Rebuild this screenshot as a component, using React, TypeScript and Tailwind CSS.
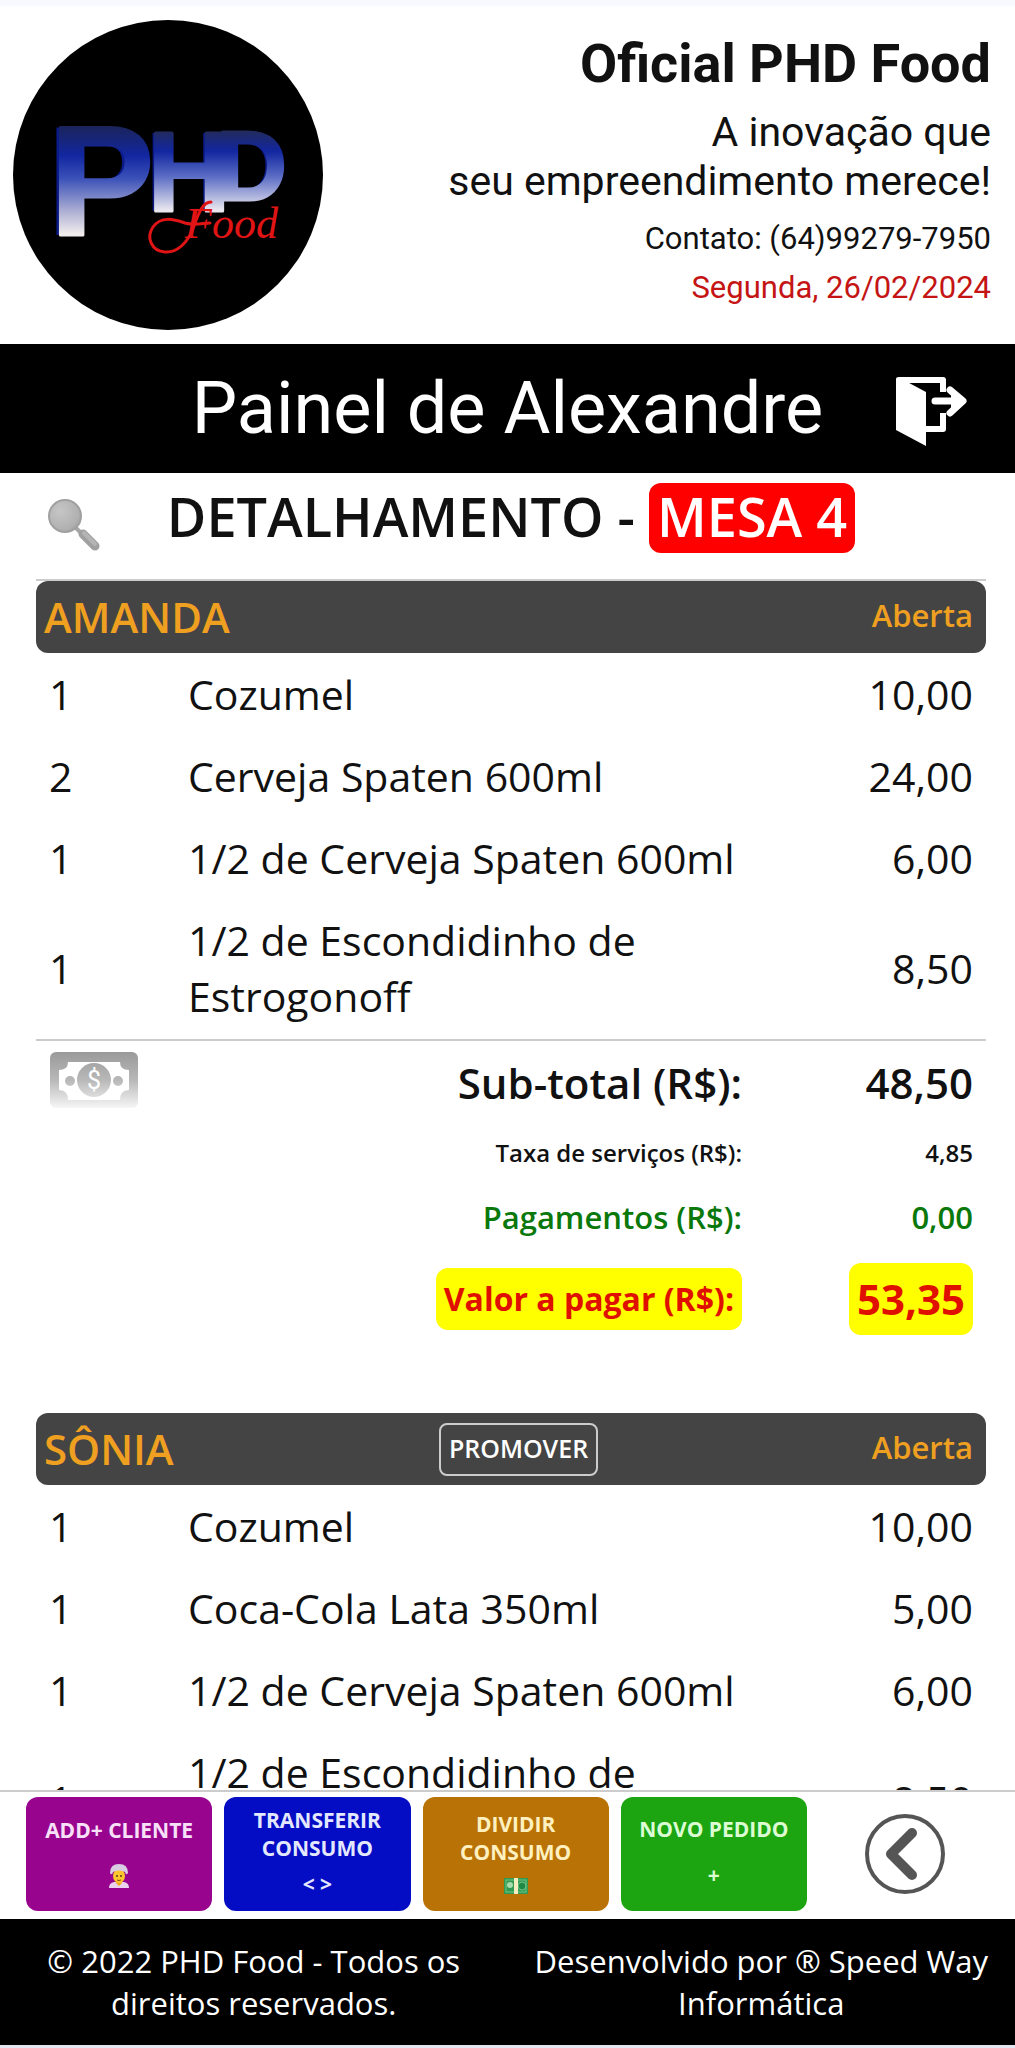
import { useState } from "react";

type Item = { qty: number; name: string; price: string };

const amanda: Item[] = [
  { qty: 1, name: "Cozumel", price: "10,00" },
  { qty: 2, name: "Cerveja Spaten 600ml", price: "24,00" },
  { qty: 1, name: "1/2 de Cerveja Spaten 600ml", price: "6,00" },
  { qty: 1, name: "1/2 de Escondidinho de Estrogonoff", price: "8,50" },
];

const sonia: Item[] = [
  { qty: 1, name: "Cozumel", price: "10,00" },
  { qty: 1, name: "Coca-Cola Lata 350ml", price: "5,00" },
  { qty: 1, name: "1/2 de Cerveja Spaten 600ml", price: "6,00" },
  { qty: 1, name: "1/2 de Escondidinho de Estrogonoff", price: "8,50" },
];

const Logo = () => (
  <svg viewBox="0 0 310 310" className="size-[310px] shrink-0" role="img" aria-label="PHD Food">
    <defs>
      <linearGradient id="metal" gradientUnits="userSpaceOnUse" x1="0" y1="102" x2="0" y2="214">
        <stop offset="0" stopColor="#1c2450" />
        <stop offset="0.3" stopColor="#1226a0" />
        <stop offset="0.5" stopColor="#3a50b8" />
        <stop offset="0.8" stopColor="#aeb0d4" />
        <stop offset="1" stopColor="#f0ecec" />
      </linearGradient>
      <linearGradient id="metalSmall" gradientUnits="userSpaceOnUse" x1="0" y1="106" x2="0" y2="190">
        <stop offset="0" stopColor="#262c4c" />
        <stop offset="0.3" stopColor="#1226a0" />
        <stop offset="0.6" stopColor="#5a6cc4" />
        <stop offset="1" stopColor="#e8e6ee" />
      </linearGradient>
    </defs>
    <circle cx="155" cy="155" r="155" fill="#000" />
    <g fontFamily="'Liberation Sans', sans-serif" fontWeight="700">
      <g fill="#0a1a86">
        <text x="33" y="215" fontSize="156">P</text>
        <text x="132" y="191" fontSize="114">H</text>
        <text x="200" y="180" fontSize="98">D</text>
      </g>
      <g strokeWidth="3" strokeLinejoin="round">
        <text x="37" y="215" fontSize="156" fill="url(#metal)" stroke="url(#metal)">P</text>
        <text x="135" y="191" fontSize="114" fill="url(#metalSmall)" stroke="url(#metalSmall)">H</text>
        <text x="203" y="180" fontSize="98" fill="url(#metalSmall)" stroke="url(#metalSmall)">D</text>
      </g>
    </g>
    <path
      d="M198 182c-8 0-12 10-17 24-6 17-17 27-29 26-14-1-19-15-12-25 8-11 20-8 32-4 10 3 18 0 25 0"
      fill="none"
      stroke="#e01414"
      strokeWidth="3"
      strokeLinecap="round"
    />
    <text x="172" y="218" fontFamily="'Liberation Serif', serif" fontStyle="italic" fontSize="44" fill="#e01414">
      Food
    </text>
  </svg>
);

const ExitIcon = () => (
  <svg viewBox="0 0 72 70" className="w-[72px]" fill="none" aria-hidden="true">
    <path d="M4 4H48V16M48 37V53H31" stroke="#fff" strokeWidth="6" strokeLinejoin="round" />
    <path d="M1 3Q1 1 4 1L16 8L31 16V70L1 54Z" fill="#fff" />
    <path d="M40 25H66M55 14L68 25L55 37" stroke="#fff" strokeWidth="7" strokeLinecap="round" strokeLinejoin="round" />
    <path d="M56 15V35L68 25Z" fill="#fff" />
  </svg>
);

const SearchIcon = () => (
  <svg viewBox="0 0 52 52" className="w-[52px]" aria-hidden="true">
    <defs>
      <radialGradient id="lens" cx="0.35" cy="0.35" r="0.75">
        <stop offset="0" stopColor="#c6c6c6" />
        <stop offset="0.8" stopColor="#b0b0b0" />
        <stop offset="1" stopColor="#9c9c9c" />
      </radialGradient>
    </defs>
    <path d="M28 29L35 36" stroke="#a6a6a6" strokeWidth="4" />
    <path d="M35 35L47 47" stroke="#a0a0a0" strokeWidth="9" strokeLinecap="round" />
    <path d="M36 34L47 45" stroke="#b4b4b4" strokeWidth="4" strokeLinecap="round" />
    <circle cx="17" cy="17" r="16" fill="url(#lens)" stroke="#a0a0a0" strokeWidth="2" />
  </svg>
);

const MoneyIcon = () => (
  <svg viewBox="0 0 88 56" className="w-[88px]" aria-hidden="true">
    <defs>
      <linearGradient id="bill" gradientUnits="userSpaceOnUse" x1="0" y1="0" x2="0" y2="56">
        <stop offset="0" stopColor="#9a9a9a" />
        <stop offset="0.5" stopColor="#b8b8b8" />
        <stop offset="1" stopColor="#f6f6f6" />
      </linearGradient>
    </defs>
    <rect width="88" height="56" rx="6" fill="url(#bill)" />
    <path d="M18 10H70Q70 18 79 18V38Q70 38 70 48H18Q18 38 9 38V18Q18 18 18 10Z" fill="#fff" />
    <circle cx="44" cy="28" r="17" fill="url(#bill)" />
    <circle cx="20" cy="29" r="5" fill="url(#bill)" />
    <circle cx="68" cy="29" r="5" fill="url(#bill)" />
    <text x="44" y="37" textAnchor="middle" fontFamily="Roboto, sans-serif" fontSize="25" fill="#fff">
      $
    </text>
  </svg>
);

const BackIcon = () => (
  <svg viewBox="0 0 82 82" className="size-[82px]" fill="none" stroke="#555" aria-hidden="true">
    <circle cx="41" cy="41" r="38" strokeWidth="4" />
    <path d="M48 20L27 41L48 62" strokeWidth="10" strokeLinecap="round" strokeLinejoin="round" />
  </svg>
);

const PersonIcon = () => (
  <svg viewBox="0 0 20 24" className="h-6 w-5" aria-hidden="true">
    <path d="M0 24Q0 19 5 18H15Q20 19 20 24Z" fill="#ead2f0" />
    <path d="M7 16H13V19L10 22L7 19Z" fill="#f2a91e" />
    <ellipse cx="10" cy="12" rx="6" ry="7" fill="#fcc62c" />
    <path d="M1 9Q1 0 10 0T19 9Q17 12 16 8Q10 5 4 8Q3 12 1 9Z" fill="#d9cbe2" />
    <circle cx="8" cy="12" r="1" fill="#5b3a1a" />
    <circle cx="12" cy="12" r="1" fill="#5b3a1a" />
    <path d="M8 16Q10 17 12 16" stroke="#8a4b14" fill="none" />
  </svg>
);

const CashIcon = () => (
  <svg viewBox="0 0 24 16" className="h-4 w-6" aria-hidden="true">
    <rect width="24" height="16" fill="#2e9b4e" />
    <rect x="2" y="2" width="20" height="12" fill="none" stroke="#74c488" />
    <circle cx="6" cy="7" r="3" fill="#a8dcae" />
    <circle cx="18" cy="8" r="4" fill="#1f8a45" stroke="#74c488" />
    <rect x="10" width="4" height="16" fill="#f5ecc0" />
  </svg>
);

type ClientHeaderProps = { name: string; status: string; onPromote?: () => void };

const ClientHeader = ({ name, status, onPromote }: ClientHeaderProps) => (
  <div className="grid h-[72px] grid-cols-[1fr_auto_1fr] items-center rounded-xl bg-[#444] pl-2 pr-[13px] font-semibold text-[#f0a020]">
    <h3 className="text-[42px] leading-none">{name}</h3>
    {onPromote ? (
      <button
        className="ml-5 h-[53px] rounded-lg border-2 border-[#ccc] px-2 text-[25px] text-white"
        onClick={onPromote}
      >
        PROMOVER
      </button>
    ) : (
      <span />
    )}
    <span className="pb-1 text-right text-[31px]">{status}</span>
  </div>
);

const Items = ({ items }: { items: Item[] }) => (
  <table className="w-full table-fixed text-[41px] leading-[56px]">
    <colgroup>
      <col className="w-[139px]" />
      <col />
      <col className="w-[231px]" />
    </colgroup>
    <tbody>
      {items.map((item) => (
        <tr key={item.name}>
          <td className="px-[13px] py-[13px]">{item.qty}</td>
          <td className="px-[13px] py-[13px]">{item.name}</td>
          <td className="px-[13px] py-[13px] text-right">{item.price}</td>
        </tr>
      ))}
    </tbody>
  </table>
);

const actions = [
  { label: "ADD+ CLIENTE", icon: <PersonIcon />, color: "bg-[#99048f] text-[#f8e0f8]" },
  { label: "TRANSFERIR CONSUMO", icon: "< >", color: "bg-[#040cc4] text-[#e4e8ff]" },
  { label: "DIVIDIR CONSUMO", icon: <CashIcon />, color: "bg-[#b97205] text-[#fff0c0]" },
  { label: "NOVO PEDIDO", icon: "+", color: "bg-[#1ca510] text-[#dcfcd4]" },
];

const App = () => {
  const [promoted, setPromoted] = useState(false);

  return (
    <div className="flex h-screen flex-col overflow-hidden border-b-[3px] border-t-[6px] border-b-[#e4e4ee] border-t-[#f8f8ff] bg-white font-['Open_Sans',sans-serif] text-[#111]">
      {/* Company header */}
      <header className="flex shrink-0 justify-between py-[14px] pl-[13px] pr-6 font-[Roboto,sans-serif]">
        <Logo />
        <div className="pt-3 text-right">
          <h1 className="text-[54px] font-bold leading-[64px]">Oficial PHD Food</h1>
          <p className="mt-3 text-[41px] leading-[49px]">
            A inovação que
            <br />
            seu empreendimento merece!
          </p>
          <p className="mt-2 text-[31px] leading-[49px]">Contato: (64)99279-7950</p>
          <p className="text-[31px] leading-[49px] text-[#c41414]">Segunda, 26/02/2024</p>
        </div>
      </header>

      {/* Panel title */}
      <div className="grid shrink-0 grid-cols-[1fr_auto_1fr] items-center bg-black pr-12 font-[Roboto,sans-serif] text-white">
        <span />
        <h2 className="ml-12 text-[72px] leading-[129px]">Painel de Alexandre</h2>
        <button aria-label="Sair" className="mt-1 justify-self-end">
          <ExitIcon />
        </button>
      </div>

      <main className="min-h-0 flex-1 overflow-hidden pl-9 pr-[29px]">
        <div className="grid h-[108px] grid-cols-[1fr_auto_1fr] items-start border-b-2 border-[#ccc] pt-[10px]">
          <button aria-label="Buscar" className="ml-3 mt-4 justify-self-start">
            <SearchIcon />
          </button>
          <h2 className="text-[54px] font-semibold leading-[66px]">
            DETALHAMENTO -{" "}
            <span className="inline-block rounded-xl bg-[red] px-2 pb-1 text-white">MESA 4</span>
          </h2>
          <span />
        </div>

        <section>
          <ClientHeader name="AMANDA" status="Aberta" />
          <Items items={amanda} />
          <div className="mt-[2px] flex items-start justify-between border-t-2 border-[#ccc]">
            <button aria-label="Pagar" className="ml-[14px] mt-[11px]">
              <MoneyIcon />
            </button>
            <table className="mr-[13px] text-right font-semibold">
              <tbody>
                <tr className="h-[82px] text-[42px]">
                  <th scope="row" className="text-right font-semibold">Sub-total (R$):</th>
                  <td className="w-[231px]">48,50</td>
                </tr>
                <tr className="h-[60px] text-[24px]">
                  <th scope="row" className="text-right font-semibold">Taxa de serviços (R$):</th>
                  <td>4,85</td>
                </tr>
                <tr className="h-[68px] text-[31px] text-[#0a780a]">
                  <th scope="row" className="text-right font-semibold">Pagamentos (R$):</th>
                  <td>0,00</td>
                </tr>
                <tr className="h-[96px] text-[32px] font-bold text-[#e01000]">
                  <th scope="row" className="text-right">
                    <span className="inline-block rounded-xl bg-[#ff0] px-2 leading-[62px]">Valor a pagar (R$):</span>
                  </th>
                  <td className="text-[42px]">
                    <span className="inline-block rounded-xl bg-[#ff0] px-2 leading-[72px]">53,35</span>
                  </td>
                </tr>
              </tbody>
            </table>
          </div>
        </section>

        <section className="mt-[66px]">
          <ClientHeader name="SÔNIA" status="Aberta" onPromote={promoted ? undefined : () => setPromoted(true)} />
          <Items items={sonia} />
        </section>
      </main>

      {/* Action bar */}
      <nav className="flex shrink-0 items-center border-t-2 border-[#ccc] pb-2 pl-[26px] pt-[5px]">
        <div className="grid flex-1 grid-cols-4 gap-3">
          {actions.map((action) => (
            <button
              key={action.label}
              className={`flex h-[114px] flex-col items-center justify-evenly rounded-xl px-2 pb-1 text-[21px] font-bold leading-7 ${action.color}`}
            >
              <span>{action.label}</span>
              <span>{action.icon}</span>
            </button>
          ))}
        </div>
        <div className="flex w-[208px] justify-center pr-3">
          <button aria-label="Voltar">
            <BackIcon />
          </button>
        </div>
      </nav>

      <footer className="grid shrink-0 grid-cols-2 bg-black py-[21px] text-center text-[31px] leading-[42px] text-white">
        <p className="px-10">© 2022 PHD Food - Todos os direitos reservados.</p>
        <p className="px-5">Desenvolvido por ® Speed Way Informática</p>
      </footer>
    </div>
  );
};

export default App;
